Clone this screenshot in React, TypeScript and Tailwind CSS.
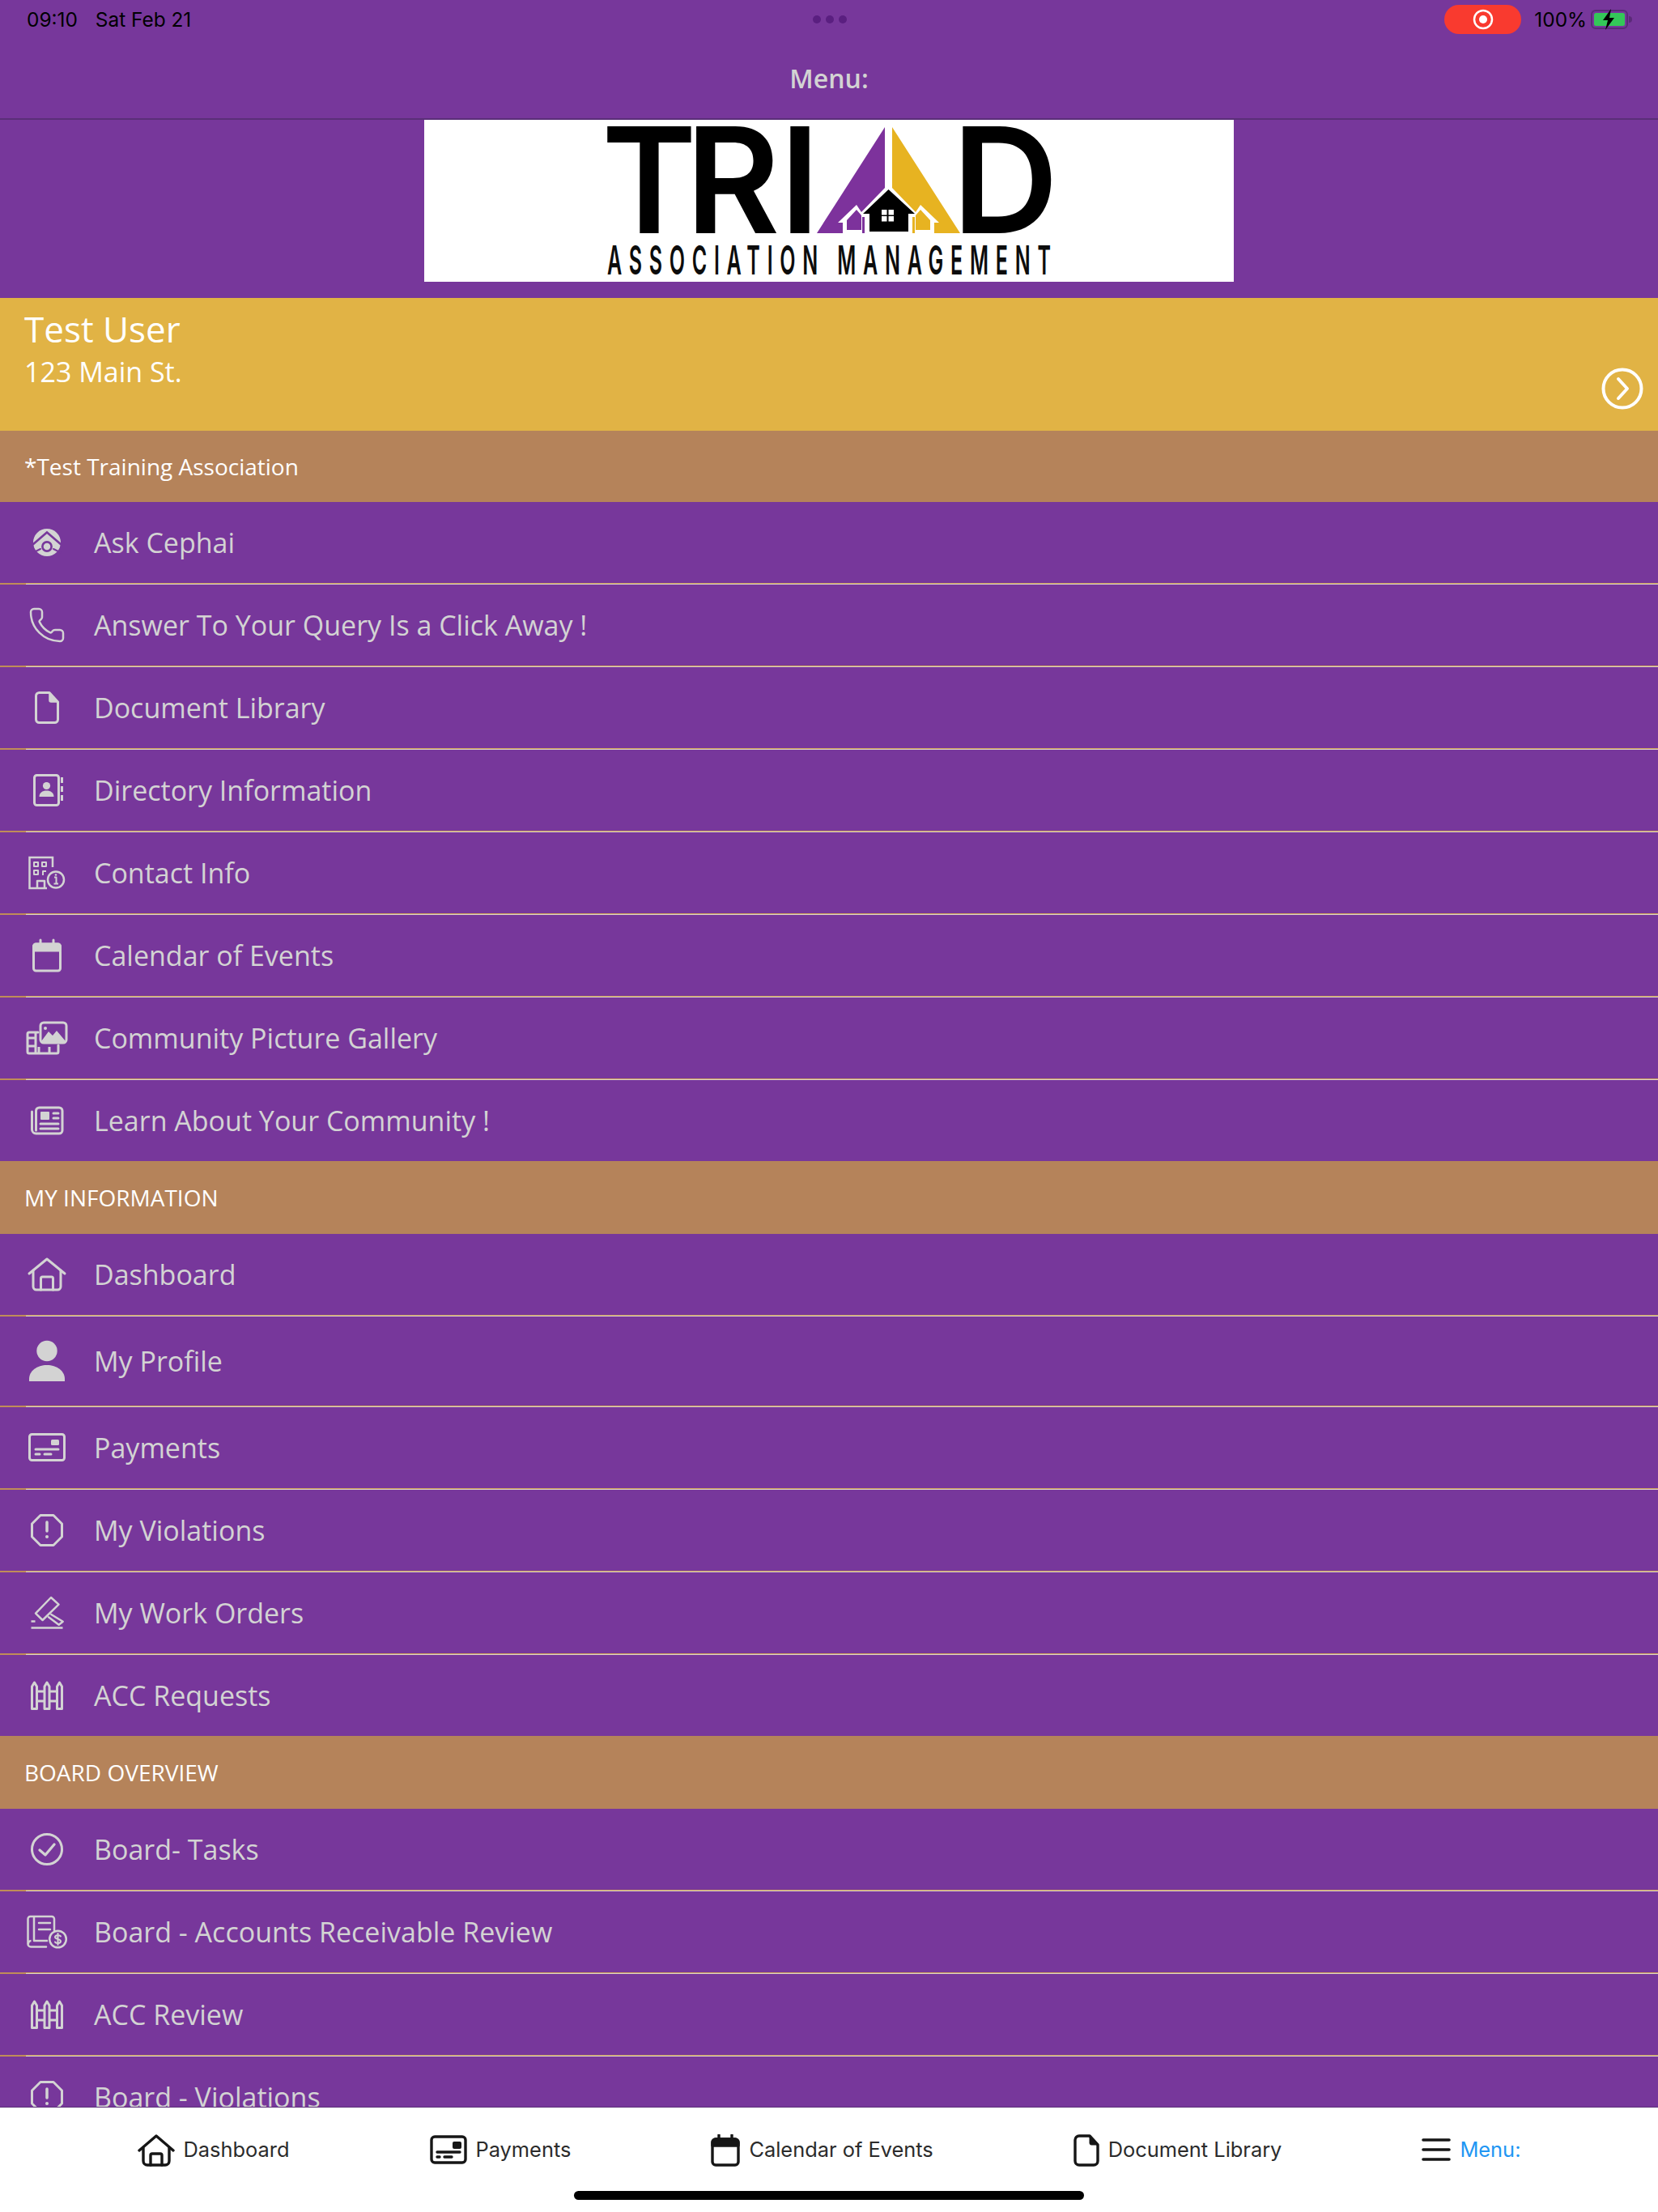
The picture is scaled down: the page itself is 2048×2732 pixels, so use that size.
import React from "react";
import { Phone } from "lucide-react";

const S = ({ children }: { children: React.ReactNode }) => (
  <svg viewBox="0 0 50 50" width={50} height={50} fill="none" stroke="currentColor" strokeWidth={3} strokeLinecap="round" strokeLinejoin="round" className="shrink-0 overflow-visible">
    {children}
  </svg>
);

const Cephai = () => (
  <S>
    <circle cx={25} cy={25} r={17} fill="currentColor" stroke="none" />
    <path d="M7 28 L25 12.5 L43 28" stroke="#77379b" strokeWidth={2.6} strokeLinecap="butt" strokeLinejoin="miter" />
    <circle cx={25} cy={30} r={5.6} fill="#d3d3d3" stroke="#77379b" strokeWidth={2.6} />
    <path d="M7 38 L17 33 M43 38 L33 33" stroke="#77379b" strokeWidth={2} />
  </S>
);
const PhoneI = () => (
  <div className="w-[50px] h-[50px] flex items-center justify-center shrink-0">
    <Phone size={48} strokeWidth={1.25} />
  </div>
);
const Doc = () => (
  <S>
    <path d="M15 6.5 H28 L38.5 18 V39.5 a4 4 0 0 1 -4 4 H15.5 a4 4 0 0 1 -4 -4 V10.5 a4 4 0 0 1 4 -4 Z" />
    <path d="M28 6.5 L38.5 18 H30 a2 2 0 0 1 -2 -2 Z" fill="currentColor" strokeWidth={1.5} />
  </S>
);
const Directory = () => (
  <S>
    <rect x={9.5} y={6.5} width={30} height={37} rx={3} />
    <circle cx={24.5} cy={19.5} r={4.6} fill="currentColor" stroke="none" />
    <path d="M15.5 33 c0 -5 4 -7.5 9 -7.5 s9 2.5 9 7.5 Z" fill="currentColor" stroke="none" />
    <path d="M43.5 9 V16 M43.5 20 V27 M43.5 31 V38" strokeLinecap="butt" />
  </S>
);
const ContactI = () => (
  <S>
    <path d="M32 18 V6 H3.5 V44 H25" strokeWidth={2.5} strokeLinecap="butt" strokeLinejoin="miter" />
    <rect x={9} y={12} width={5} height={5} strokeWidth={2} />
    <rect x={19} y={12} width={5} height={5} strokeWidth={2} />
    <rect x={9} y={22} width={5} height={5} strokeWidth={2} />
    <path d="M20 28 V23 H24" strokeWidth={2} strokeLinecap="butt" />
    <path d="M13 44 V35 H22 V44" strokeWidth={2.5} strokeLinecap="butt" />
    <circle cx={36} cy={33.5} r={10} strokeWidth={2.5} />
    <path d="M34 30.5 H36.5 V38.5 M33.5 38.5 H39" strokeWidth={2} strokeLinecap="butt" />
    <circle cx={36} cy={27.5} r={1.3} fill="currentColor" stroke="none" />
  </S>
);
const Calendar = () => (
  <S>
    <rect x={8.5} y={11} width={33} height={33} rx={3} />
    <path d="M8.5 14 a3 3 0 0 1 3 -3 H38.5 a3 3 0 0 1 3 3 V19 H8.5 Z" fill="currentColor" />
    <path d="M17 6 V12 M33 6 V12" />
  </S>
);
const Gallery = () => (
  <S>
    <rect x={17} y={6} width={32} height={25} rx={4} />
    <circle cx={23} cy={13} r={2} fill="currentColor" stroke="none" />
    <path d="M18 29 L27 17 L32 22 L37 16 L48 29 V31 H18 Z" fill="currentColor" stroke="none" />
    <path d="M14 18 H3 a2 2 0 0 0 -2 2 V42 a2 2 0 0 0 2 2 H37 a2 2 0 0 0 2 -2 V34" />
    <path d="M11 18 V44 M2 25 H11 M2 35 H11 M15 36 V44 M28 36 V44" strokeLinecap="butt" />
  </S>
);
const News = () => (
  <S>
    <path d="M11.5 37 V13 a4 4 0 0 1 4 -4 H40 a4 4 0 0 1 4 4 V37 a4 4 0 0 1 -4 4 H11.5 a5 5 0 0 1 -5 -5 V14" />
    <rect x={17} y={14} width={11} height={10} rx={1} fill="currentColor" stroke="none" />
    <path d="M33 16 H39 M33 22 H39 M17 29 H39 M17 35 H39" />
  </S>
);
const Home = () => (
  <S>
    <path d="M3 24 L25 6 L47 24" />
    <path d="M8 20 V40 a4 4 0 0 0 4 4 H38 a4 4 0 0 0 4 -4 V20" />
    <path d="M17.5 44 V30 a2 2 0 0 1 2 -2 H30.5 a2 2 0 0 1 2 2 V44" />
  </S>
);
const Profile = () => (
  <S>
    <circle cx={25} cy={12.5} r={12.7} fill="currentColor" stroke="none" />
    <path d="M3 50 V47 C3 37 13 30 25 30 S47 37 47 47 V50 Z" fill="currentColor" stroke="none" />
  </S>
);
const Payment = () => (
  <S>
    <rect x={3.5} y={8.5} width={43} height={32} rx={3} />
    <rect x={30} y={15} width={10} height={7} rx={1.5} fill="currentColor" stroke="none" />
    <path d="M11 27 H39 M11 33 H16 M22 33 H30" />
  </S>
);
const Octagon = () => (
  <S>
    <path d="M17 6.5 H33 L43.5 17 V33 L33 43.5 H17 L6.5 33 V17 Z" />
    <path d="M25 15 V26" strokeWidth={3.5} />
    <circle cx={25} cy={33} r={2} fill="currentColor" stroke="none" />
  </S>
);
const WorkOrder = () => (
  <S>
    <path d="M30 6 L39.5 14.7 L19.6 34 L11 25.7 Z" strokeWidth={2.5} />
    <path d="M30.3 27 L44.7 35.7 L39.7 39.7 L27 30.3" strokeWidth={2.5} />
    <path d="M5.5 43.5 H44.5 M5.5 35.5 H10.5" strokeWidth={2.5} strokeLinecap="butt" />
  </S>
);
const Fence = () => (
  <S>
    <path d="M6.5 41.5 V14 L9.5 9 L12.5 14 V41.5 Z" />
    <path d="M22 41.5 V14 L25 9 L28 14 V41.5 Z" />
    <path d="M37.5 41.5 V14 L40.5 9 L43.5 14 V41.5 Z" />
    <path d="M13 20 H21 M13 32 H21 M29 20 H37 M29 32 H37" strokeLinecap="butt" />
  </S>
);
const Tasks = () => (
  <S>
    <circle cx={25} cy={25} r={18.5} />
    <path d="M16 26 L23 32 L34 19" strokeWidth={3.2} />
  </S>
);
const Accounts = () => (
  <S>
    <path d="M24 43.5 H5 a3.5 3.5 0 0 1 -3.5 -3.5 V9 a3 3 0 0 1 3 -3 H31 a3 3 0 0 1 3 3 V23" strokeWidth={2.5} />
    <path d="M9 6 V36 H26 M2 40 a3.5 3.5 0 0 1 3.5 -4" strokeWidth={2.5} strokeLinecap="butt" />
    <path d="M15 14 H29 M15 22 H29" strokeWidth={2.5} />
    <circle cx={38.5} cy={34} r={10.3} strokeWidth={2.5} />
    <path d="M42 30.5 C41 28.7 35 28.5 35 31.5 C35 34.5 42 33.5 42 36.7 C42 39.5 36 39.5 35 37.5 M38.5 27 V41" strokeWidth={2} />
  </S>
);

type Row = { t: string; I: React.FC; tall?: boolean };
const sec1: Row[] = [
  { t: "Ask Cephai", I: Cephai },
  { t: "Answer To Your Query Is a Click Away !", I: PhoneI },
  { t: "Document Library", I: Doc },
  { t: "Directory Information", I: Directory },
  { t: "Contact Info", I: ContactI },
  { t: "Calendar of Events", I: Calendar },
  { t: "Community Picture Gallery", I: Gallery },
  { t: "Learn About Your Community !", I: News },
];
const sec2: Row[] = [
  { t: "Dashboard", I: Home },
  { t: "My Profile", I: Profile, tall: true },
  { t: "Payments", I: Payment },
  { t: "My Violations", I: Octagon },
  { t: "My Work Orders", I: WorkOrder },
  { t: "ACC Requests", I: Fence },
];
const sec3: Row[] = [
  { t: "Board- Tasks", I: Tasks },
  { t: "Board - Accounts Receivable Review", I: Accounts },
  { t: "ACC Review", I: Fence },
  { t: "Board - Violations", I: Octagon },
];

const MenuRow = ({ r, last }: { r: Row; last: boolean }) => (
  <div className="flex flex-col shrink-0">
    <div className={`${r.tall ? "h-[110px]" : "h-[100px]"} flex items-center pl-[33px] text-[#d3d3d3]`}>
      <r.I />
      <span className="ml-[33px] text-[34px]">{r.t}</span>
    </div>
    {!last && (
      <div className="flex h-[2px]">
        <div className="w-[32px] bg-[#c08c58]" />
        <div className="flex-1 flex flex-col">
          <div className="h-px bg-[#cfa25c]" />
          <div className="h-px bg-[#dcd2c8]" />
        </div>
      </div>
    )}
  </div>
);

const SectionH = ({ t, cls }: { t: string; cls: string }) => (
  <div className={`bg-[#b5835a] flex items-center pl-[30px] text-white text-[28px] ${cls}`}>{t}</div>
);

const Logo = () => (
  <svg viewBox="0 0 1000 200" width={1000} height={200} className="block bg-white">
    <g fill="#000" fontFamily="Inter, 'Liberation Sans', sans-serif" fontWeight={600} fontSize={182}>
      <text x={0} y={0} letterSpacing={-14} transform="translate(219 140) scale(0.98 1)">TR<tspan dx={14}>I</tspan></text>
      <text x={652} y={140}>D</text>
    </g>
    <text x={0} y={0} fill="#0c0c0c" fontFamily="Inter, 'Liberation Sans', sans-serif" fontWeight={600} fontSize={50} textLength={1096} lengthAdjust="spacing" transform="translate(226 191) scale(0.5 1)">ASSOCIATION MANAGEMENT</text>
    <path d="M485 140 L569 9 V84 L540 114 L534 105 L511 127 H517 V140 Z" fill="#7d329c" />
    <path d="M534 111 L522 124 V136 H540 V118 Z" fill="#7d329c" />
    <path d="M662 140 L578 9 V84 L607 114 L613 105 L636 127 H630 V140 Z" fill="#e7b321" />
    <path d="M613 111 L625 124 V136 H607 V118 Z" fill="#e7b321" />
    <rect x={541} y={120} width={3} height={20} fill="#7d329c" />
    <rect x={603} y={120} width={3} height={20} fill="#e7b321" />
    <path d="M573.5 86 L542 116 H550 V138 H598 V116 H606 Z" fill="#000" />
    <path d="M565 111 h6.5 v6.5 h-6.5 Z M573.5 111 h6.5 v6.5 h-6.5 Z M565 119 h6.5 v6.5 h-6.5 Z M573.5 119 h6.5 v6.5 h-6.5 Z" fill="#fff" />
  </svg>
);

const Bolt = () => (
  <svg viewBox="0 0 50 26" width={52} height={26} className="shrink-0">
    <rect x={1} y={2} width={44} height={22} rx={5} fill="none" stroke="#5a2a78" strokeWidth={2} />
    <rect x={4} y={5} width={38} height={16} rx={2.5} fill="#34c759" />
    <path d="M47 9 a4 4 0 0 1 0 8 Z" fill="#5a2a78" />
    <path d="M25 0 L15 14 H21 L18 26 L29 11 H23 Z" fill="#000" />
  </svg>
);

const TabDoc = () => (
  <svg viewBox="0 0 32 40" width={32} height={40} fill="none" stroke="#161616" strokeWidth={3.4} strokeLinejoin="round" className="shrink-0">
    <path d="M7 2 H20 L30 13 V33 a5 5 0 0 1 -5 5 H7 a5 5 0 0 1 -5 -5 V7 a5 5 0 0 1 5 -5 Z" />
    <path d="M20 2 L30 13 H22 a2 2 0 0 1 -2 -2 Z" fill="#161616" strokeWidth={1} />
  </svg>
);
const TabHome = () => (
  <svg viewBox="0 0 46 40" width={46} height={40} fill="none" stroke="#161616" strokeWidth={3.4} strokeLinecap="round" strokeLinejoin="round" className="shrink-0">
    <path d="M2 20 L23 2 L44 20" />
    <path d="M7 17 V33 a5 5 0 0 0 5 5 H34 a5 5 0 0 0 5 -5 V17" />
    <path d="M16 38 V26 a2 2 0 0 1 2 -2 H28 a2 2 0 0 1 2 2 V38" />
  </svg>
);
const TabPay = () => (
  <svg viewBox="0 0 46 36" width={46} height={36} fill="none" stroke="#161616" strokeWidth={3.4} strokeLinecap="round" strokeLinejoin="round" className="shrink-0">
    <rect x={2} y={2} width={42} height={32} rx={4} />
    <rect x={28} y={8} width={11} height={9} rx={2} fill="#161616" stroke="none" />
    <path d="M9 21 H37 M9 27 H12 M18 27 H27" />
  </svg>
);
const TabCal = () => (
  <svg viewBox="0 0 36 40" width={36} height={40} fill="none" stroke="#161616" strokeWidth={3.4} strokeLinecap="round" strokeLinejoin="round" className="shrink-0">
    <rect x={2} y={6} width={32} height={32} rx={4} />
    <path d="M2 10 a4 4 0 0 1 4 -4 H30 a4 4 0 0 1 4 4 V14 H2 Z" fill="#161616" />
    <path d="M10 1 V6 M26 1 V6" />
  </svg>
);
const TabMenu = () => (
  <svg viewBox="0 0 36 30" width={36} height={30} fill="none" stroke="#161616" strokeWidth={3.6} strokeLinecap="round" className="shrink-0">
    <path d="M2 3 H34 M2 15 H34 M2 27 H34" />
  </svg>
);

const Tab = ({ icon, t, blue }: { icon: React.ReactNode; t: string; blue?: boolean }) => (
  <div className="flex items-center gap-[11px]">
    {icon}
    <span className={`text-[25.4px] ${blue ? "text-[#2196f3]" : "text-[#2b2b2b]"}`}>{t}</span>
  </div>
);

export default function App() {
  return (
    <div className="w-[2048px] h-[2732px] bg-[#77379b] flex flex-col overflow-hidden font-['Open_Sans',sans-serif]">
      <div className="h-[148px] shrink-0 border-b-2 border-[#5a2f78] flex flex-col">
        <div className="h-[48px] shrink-0 flex items-center justify-between pl-[33px] pr-[32px] font-['Inter',sans-serif] text-[24.4px] text-black">
          <div className="flex items-center gap-[22px] w-[600px]">
            <span>09:10</span>
            <span>Sat Feb 21</span>
          </div>
          <div className="flex items-center gap-[6px]">
            <span className="w-[10px] h-[10px] rounded-full bg-[#5a1f80]" />
            <span className="w-[10px] h-[10px] rounded-full bg-[#5a1f80]" />
            <span className="w-[10px] h-[10px] rounded-full bg-[#5a1f80]" />
          </div>
          <div className="flex items-center justify-end w-[600px]">
            <div className="w-[95px] h-[36px] rounded-full bg-[#f93a2f] flex items-center justify-center mr-[16px]">
              <svg viewBox="0 0 26 26" width={26} height={26}>
                <circle cx={13} cy={13} r={11} fill="none" stroke="#fff" strokeWidth={2.5} />
                <circle cx={13} cy={13} r={5} fill="#fff" />
              </svg>
            </div>
            <span className="mr-[4px]">100%</span>
            <Bolt />
          </div>
        </div>
        <div className="flex-1 flex items-center justify-center text-[#d3d3d3] text-[32px] font-semibold">Menu:</div>
      </div>

      <div className="flex-1 min-h-0 overflow-hidden flex flex-col">
        <div className="h-[220px] shrink-0 flex justify-center items-start">
          <Logo />
        </div>
        <div className="h-[164px] shrink-0 bg-[#e1b345] flex flex-col pl-[30px] pr-[18px] text-white">
          <div className="text-[44px] leading-[60px] mt-[8px]">Test User</div>
          <div className="text-[34px] leading-[46px]">123 Main St.</div>
          <div className="flex justify-end -mt-[28px]">
            <svg viewBox="0 0 52 52" width={52} height={52} fill="none" stroke="#fff" strokeWidth={4} strokeLinecap="round" strokeLinejoin="round">
              <circle cx={26} cy={26} r={23.5} />
              <path d="M21 14 L32 26 L21 38" />
            </svg>
          </div>
        </div>
        <SectionH t="*Test Training Association" cls="h-[88px] shrink-0" />
        {sec1.map((r, i) => <MenuRow key={r.t} r={r} last={i === sec1.length - 1} />)}
        <SectionH t="MY INFORMATION" cls="h-[90px] shrink-0" />
        {sec2.map((r, i) => <MenuRow key={r.t} r={r} last={i === sec2.length - 1} />)}
        <SectionH t="BOARD OVERVIEW" cls="h-[90px] shrink-0" />
        {sec3.map((r, i) => <MenuRow key={r.t} r={r} last={i === sec3.length - 1} />)}
      </div>

      <div className="h-[130px] shrink-0 bg-white border-t border-[#5a2f78] flex flex-col font-['Inter',sans-serif]">
        <div className="h-[103px] flex items-center justify-center gap-[173px] pt-[2px]">
          <Tab icon={<TabHome />} t="Dashboard" />
          <Tab icon={<TabPay />} t="Payments" />
          <Tab icon={<TabCal />} t="Calendar of Events" />
          <Tab icon={<TabDoc />} t="Document Library" />
          <Tab icon={<TabMenu />} t="Menu:" blue />
        </div>
        <div className="w-[630px] h-[11px] rounded-full bg-black self-center" />
      </div>
    </div>
  );
}
